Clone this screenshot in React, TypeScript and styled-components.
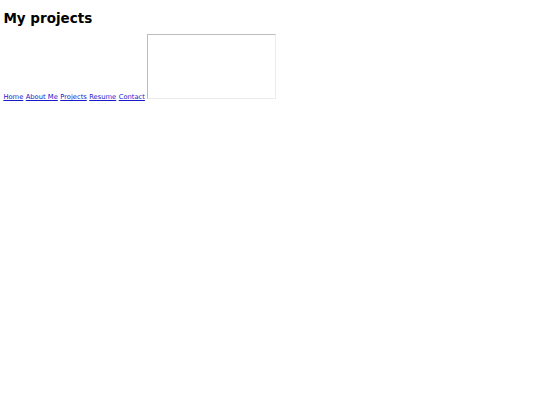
import React from "react";
import styled, { createGlobalStyle } from "styled-components";

const S = 540 / 1280;

const Global = createGlobalStyle`
  html, body { background: #ffffff; }
  body {
    margin: ${8 * S}px;
    font-family: "DejaVu Sans", Verdana, sans-serif;
    font-size: ${16 * S}px;
    color: #000000;
  }
`;

const Title = styled.h1`
  font-family: "DejaVu Sans", Verdana, sans-serif;
  font-size: ${32 * S}px;
  line-height: 1;
  font-weight: bold;
  margin: 8.4px 0 8.6px;
`;

const Nav = styled.nav`
  font-size: ${16 * S}px;
`;

const NavLink = styled.a`
  color: #1a1acc;
  text-decoration: underline;
  margin-right: 2.4px;
`;

const Frame = styled.div`
  display: inline-block;
  vertical-align: baseline;
  width: 126.5px;
  height: 63.5px;
  border-style: solid;
  border-width: 1px;
  border-color: #bcbcbc #ececec #ececec #bcbcbc;
`;

const links = ["Home", "About Me", "Projects", "Resume", "Contact"];

export default function App() {
  return (
    <>
      <Global />
      <Title>My projects</Title>
      <Nav>
        {links.map((l) => (
          <NavLink key={l} href="#">
            {l}
          </NavLink>
        ))}
        <Frame />
      </Nav>
    </>
  );
}
